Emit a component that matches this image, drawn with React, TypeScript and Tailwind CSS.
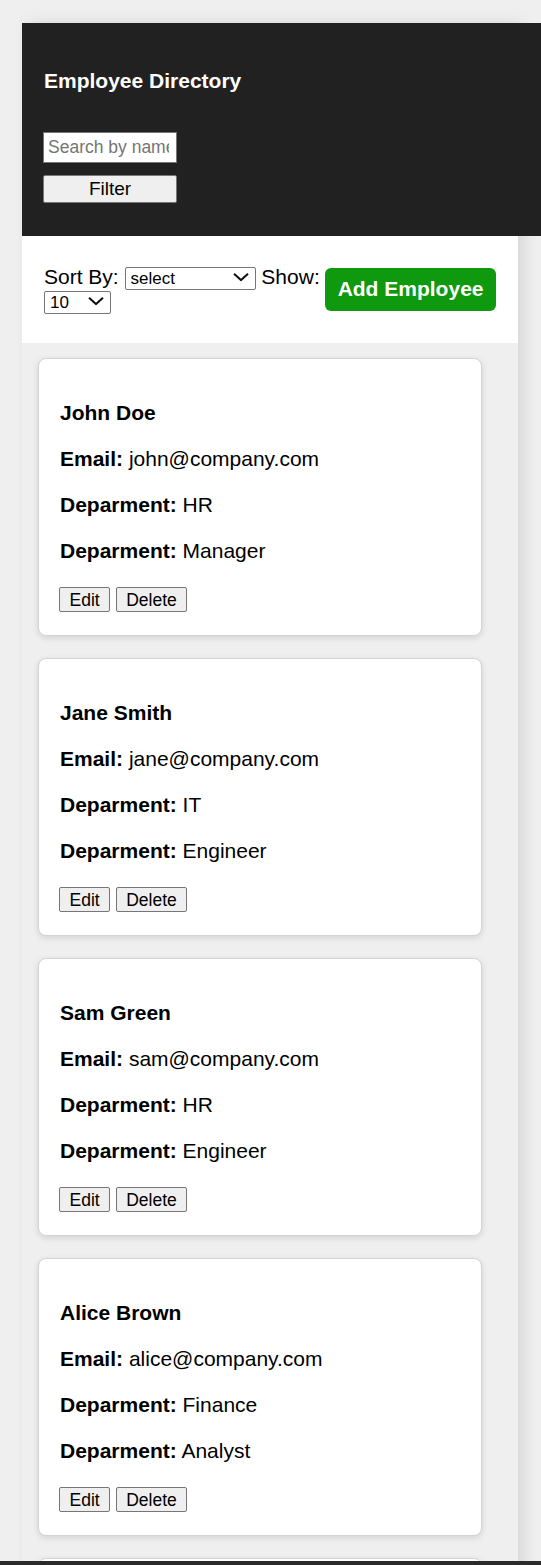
import React from 'react';

type Employee = { name: string; email: string; department: string; role: string };

const employees: Employee[] = [
  { name: 'John Doe', email: 'john@company.com', department: 'HR', role: 'Manager' },
  { name: 'Jane Smith', email: 'jane@company.com', department: 'IT', role: 'Engineer' },
  { name: 'Sam Green', email: 'sam@company.com', department: 'HR', role: 'Engineer' },
  { name: 'Alice Brown', email: 'alice@company.com', department: 'Finance', role: 'Analyst' },
  { name: 'Bob White', email: 'bob@company.com', department: 'IT', role: 'Designer' },
];

const Chevron: React.FC = () => (
  <svg width="16" height="9" viewBox="0 0 16 9" className="pointer-events-none absolute right-[7px] top-1/2 -translate-y-1/2">
    <path d="M1 1.2 L8 7.6 L15 1.2" fill="none" stroke="#111" strokeWidth="2" />
  </svg>
);

const FakeSelect: React.FC<{ value: string; width: string }> = ({ value, width }) => (
  <span className={`relative inline-block h-[23px] align-top ${width}`}>
    <select
      defaultValue={value}
      className="h-[23px] w-full appearance-none rounded-[2px] border border-[#767676] bg-white pl-[5px] text-[17px] leading-[21px] text-black"
    >
      <option>{value}</option>
    </select>
    <Chevron />
  </span>
);

const EmployeeCard: React.FC<{ emp: Employee }> = ({ emp }) => (
  <div className="w-[444px] shrink-0 rounded-[8px] border border-[#d3d3d3] bg-white px-[21px] pt-[42px] pb-[23px] shadow-[0_2px_6px_rgba(0,0,0,0.12)]">
    <div className="text-[21px] leading-[24px] font-bold">{emp.name}</div>
    <div className="mt-[22px] text-[21px] leading-[24px]">
      <strong>Email:</strong> {emp.email}
    </div>
    <div className="mt-[22px] text-[21px] leading-[24px]">
      <strong>Deparment:</strong> {emp.department}
    </div>
    <div className="mt-[22px] text-[21px] leading-[24px]">
      <strong>Deparment:</strong> {emp.role}
    </div>
    <div className="mt-[24px] -ml-[1px] flex gap-[6px]">
      <button className="h-[25px] rounded-[2px] border border-[#767676] bg-[#efefef] px-[9.5px] text-[17.5px] leading-[20px]">Edit</button>
      <button className="h-[25px] rounded-[2px] border border-[#767676] bg-[#efefef] px-[9px] text-[17.5px] leading-[20px]">Delete</button>
    </div>
  </div>
);

const App: React.FC = () => {
  return (
    <div className="relative h-[1565px] overflow-hidden bg-[#efefef] text-black font-['Liberation_Sans',Arial,sans-serif]">
      <div className="ml-[22px] mt-[23px] w-[496px] bg-[#efefef] shadow-[6px_0_14px_rgba(0,0,0,0.1)]">
        {/* Header */}
        <header className="flex w-[540px] flex-col items-start bg-[#212121] pl-[22px] pt-[46px] pb-[33px]">
          <h1 className="text-[21px] leading-[24px] font-bold text-white">Employee Directory</h1>
          <input
            type="text"
            placeholder="Search by name"
            className="mt-[39px] -ml-[1px] h-[31px] w-[134px] border border-[#767676] bg-white pl-[4px] pr-[7px] text-[17.5px] text-black placeholder:text-[#757575]"
          />
          <button className="mt-[12px] -ml-[1px] h-[28px] w-[134px] rounded-[2px] border border-[#767676] bg-[#efefef] text-[19px] leading-[22px] text-black">
            Filter
          </button>
        </header>

        {/* Toolbar */}
        <div className="flex items-center justify-between bg-white px-[22px] pt-[29px] pb-[30px]">
          <div className="min-w-0 flex-1 text-[21px] leading-[24px]">
            Sort By: <FakeSelect value="select" width="w-[131px]" /> Show: <FakeSelect value="10" width="w-[67px]" />
          </div>
          <button className="h-[43px] shrink-0 rounded-[6px] bg-[#0e990e] px-[12.5px] text-[21px] leading-[24px] font-bold text-white">
            Add Employee
          </button>
        </div>

        {/* Cards */}
        <div className="flex flex-col gap-[22px] pl-[16px] pt-[15px]">
          {employees.map((emp) => (
            <EmployeeCard key={emp.email} emp={emp} />
          ))}
        </div>
      </div>

      {/* Footer peeking in at the bottom */}
      <div className="absolute bottom-0 left-0 h-[4px] w-full bg-[#2b2b2b]" />
    </div>
  );
};

export default App;
